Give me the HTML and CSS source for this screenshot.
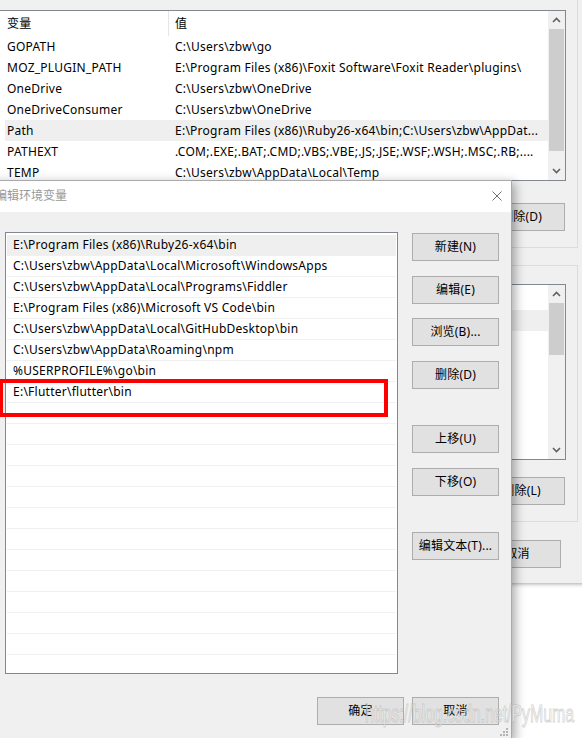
FILE: index.html
```html
<!DOCTYPE html>
<html lang="zh-CN">
<head>
<meta charset="utf-8">
<title>编辑环境变量</title>
<link rel="stylesheet" href="styles.css">
</head>
<body>
<div class="desk">

  <!-- background dialog: 环境变量 -->
  <div class="win-back">
    <div class="group g1">
      <div class="lv lv1">
        <div class="lv-body">
          <div class="lv-head"><div class="c1">变量</div><div class="c2">值</div></div>
          <div class="lv-row"><div class="c1">GOPATH</div><div class="c2">C:\Users\zbw\go</div></div>
          <div class="lv-row"><div class="c1">MOZ_PLUGIN_PATH</div><div class="c2">E:\Program Files (x86)\Foxit Software\Foxit Reader\plugins\</div></div>
          <div class="lv-row"><div class="c1">OneDrive</div><div class="c2">C:\Users\zbw\OneDrive</div></div>
          <div class="lv-row"><div class="c1">OneDriveConsumer</div><div class="c2">C:\Users\zbw\OneDrive</div></div>
          <div class="lv-row sel"><div class="c1">Path</div><div class="c2">E:\Program Files (x86)\Ruby26-x64\bin;C:\Users\zbw\AppDat...</div></div>
          <div class="lv-row"><div class="c1">PATHEXT</div><div class="c2">.COM;.EXE;.BAT;.CMD;.VBS;.VBE;.JS;.JSE;.WSF;.WSH;.MSC;.RB;....</div></div>
          <div class="lv-row"><div class="c1">TEMP</div><div class="c2">C:\Users\zbw\AppData\Local\Temp</div></div>
        </div>
        <div class="vs">
          <div class="vs-arrow"><svg width="9" height="6" viewBox="0 0 9 6"><polyline points="1,5 4.5,1.5 8,5" fill="none" stroke="#606060" stroke-width="1.6"/></svg></div>
          <div class="vs-thumb" style="height:122px"></div>
          <div class="vs-fill"></div>
          <div class="vs-arrow dn"><svg width="9" height="6" viewBox="0 0 9 6"><polyline points="1,1 4.5,4.5 8,1" fill="none" stroke="#606060" stroke-width="1.6"/></svg></div>
        </div>
      </div>
      <div class="grp-btns">
        <button class="btn">新建(N)...</button>
        <button class="btn">编辑(E)...</button>
        <button class="btn">删除(D)</button>
      </div>
    </div>

    <div class="group g2">
      <div class="lv lv2">
        <div class="lv-body">
          <div class="lv-head"><div class="c1">变量</div><div class="c2">值</div></div>
          <div class="lv-row sel"><div class="c1">ComSpec</div><div class="c2">C:\WINDOWS\system32\cmd.exe</div></div>
          <div class="lv-row"><div class="c1">DriverData</div><div class="c2">C:\Windows\System32\Drivers\DriverData</div></div>
          <div class="lv-row"><div class="c1">NUMBER_OF_PROCESSORS</div><div class="c2">4</div></div>
          <div class="lv-row"><div class="c1">OS</div><div class="c2">Windows_NT</div></div>
          <div class="lv-row"><div class="c1">Path</div><div class="c2">C:\WINDOWS\system32;C:\WINDOWS</div></div>
          <div class="lv-row"><div class="c1">PATHEXT</div><div class="c2">.COM;.EXE;.BAT;.CMD;.VBS;.VBE</div></div>
          <div class="lv-row"><div class="c1">PROCESSOR_ARCHITECTURE</div><div class="c2">AMD64</div></div>
        </div>
        <div class="vs">
          <div class="vs-arrow"><svg width="9" height="6" viewBox="0 0 9 6"><polyline points="1,5 4.5,1.5 8,5" fill="none" stroke="#606060" stroke-width="1.6"/></svg></div>
          <div class="vs-thumb" style="height:52px"></div>
          <div class="vs-fill"></div>
          <div class="vs-arrow dn"><svg width="9" height="6" viewBox="0 0 9 6"><polyline points="1,1 4.5,4.5 8,1" fill="none" stroke="#606060" stroke-width="1.6"/></svg></div>
        </div>
      </div>
      <div class="grp-btns">
        <button class="btn">新建(W)...</button>
        <button class="btn">编辑(I)...</button>
        <button class="btn">删除(L)</button>
      </div>
    </div>

    <div class="back-foot">
      <button class="btn">确定</button>
      <button class="btn">取消</button>
    </div>
    <svg class="grip" width="8" height="8" viewBox="0 0 8 8"><rect x="6" y="0" width="2" height="2"/><rect x="3" y="3" width="2" height="2"/><rect x="6" y="3" width="2" height="2"/><rect x="0" y="6" width="2" height="2"/><rect x="3" y="6" width="2" height="2"/><rect x="6" y="6" width="2" height="2"/></svg>
  </div>

  <!-- foreground dialog: 编辑环境变量 -->
  <div class="win-front">
    <div class="titlebar">
      <span class="title">编辑环境变量</span>
      <svg class="close" width="10" height="10" viewBox="0 0 10 10"><path d="M0.5 0.5 L9.5 9.5 M9.5 0.5 L0.5 9.5" stroke="#6f6f6f" stroke-width="1" fill="none"/></svg>
    </div>
    <div class="fg-main">
      <div class="pathlist">
        <div class="p-row sel">E:\Program Files (x86)\Ruby26-x64\bin</div>
        <div class="p-row">C:\Users\zbw\AppData\Local\Microsoft\WindowsApps</div>
        <div class="p-row">C:\Users\zbw\AppData\Local\Programs\Fiddler</div>
        <div class="p-row">E:\Program Files (x86)\Microsoft VS Code\bin</div>
        <div class="p-row">C:\Users\zbw\AppData\Local\GitHubDesktop\bin</div>
        <div class="p-row">C:\Users\zbw\AppData\Roaming\npm</div>
        <div class="p-row">%USERPROFILE%\go\bin</div>
        <div class="p-row">E:\Flutter\flutter\bin</div>
        <div class="p-row"></div>
        <div class="p-row"></div>
        <div class="p-row"></div>
        <div class="p-row"></div>
        <div class="p-row"></div>
        <div class="p-row"></div>
        <div class="p-row"></div>
        <div class="p-row"></div>
        <div class="p-row"></div>
        <div class="p-row"></div>
        <div class="p-row"></div>
        <div class="p-row"></div>
        <div class="p-row"></div>
      </div>
      <div class="side">
        <button class="btn">新建(N)</button>
        <button class="btn">编辑(E)</button>
        <button class="btn">浏览(B)...</button>
        <button class="btn">删除(D)</button>
        <button class="btn gap-lg">上移(U)</button>
        <button class="btn">下移(O)</button>
        <button class="btn gap-lg">编辑文本(T)...</button>
      </div>
    </div>
    <div class="fg-foot">
      <button class="btn">确定</button>
      <button class="btn">取消</button>
    </div>
    <svg class="grip" width="8" height="8" viewBox="0 0 8 8"><rect x="6" y="0" width="2" height="2"/><rect x="3" y="3" width="2" height="2"/><rect x="6" y="3" width="2" height="2"/><rect x="0" y="6" width="2" height="2"/><rect x="3" y="6" width="2" height="2"/><rect x="6" y="6" width="2" height="2"/></svg>
  </div>

  <div class="redbox"></div>
  <div class="watermark">https://blog.csdn.net/PyMuma</div>
</div>
</body>
</html>
```

FILE: styles.css
```css
* { box-sizing: border-box; }
html, body { margin: 0; padding: 0; }
body {
  width: 582px;
  height: 738px;
  overflow: hidden;
  background: #fff;
  font-family: "Noto Sans", "Noto Sans CJK SC", sans-serif;
  font-size: 12px;
  line-height: 16px;
  letter-spacing: 0.25px;
  color: #000;
}
.desk {
  position: relative;
  width: 582px;
  height: 738px;
  overflow: hidden;
  background: #fff;
}

/* ---------- buttons ---------- */
.btn {
  -webkit-appearance: none;
  appearance: none;
  width: 87px;
  height: 28px;
  flex: none;
  margin: 0;
  padding: 0;
  background: #e1e1e1;
  border: 1px solid #adadad;
  border-radius: 0;
  font-family: inherit;
  font-size: 12px;
  line-height: 16px;
  letter-spacing: 0.2px;
  color: #000;
  display: flex;
  align-items: center;
  justify-content: center;
  white-space: nowrap;
}

/* ---------- background window ---------- */
.win-back {
  position: absolute;
  left: -20px;
  top: -20px;
  width: 612px;
  background: #f0f0f0;
  padding: 15px 14px 15px 5px;
  box-shadow: 0 1px 4px rgba(0, 0, 0, 0.35);
  display: flex;
  flex-direction: column;
}
.group {
  border: 1px solid #dcdcdc;
  padding: 14px 11px 16px 12px;
  display: flex;
  flex-direction: column;
}
.group.g2 {
  margin-top: 17px;
  padding-top: 18px;
}
.grp-btns {
  display: flex;
  justify-content: flex-end;
  gap: 9px;
  margin-top: 22px;
  padding-right: 1px;
}
.g2 .grp-btns { margin-top: 17px; }
.back-foot {
  display: flex;
  justify-content: flex-end;
  gap: 8px;
  margin-top: 18px;
  margin-right: 17px;
}

.lv {
  border: 1px solid #828790;
  background: #fff;
  display: flex;
}
.lv1 { height: 171px; }
.lv2 { height: 176px; }
.lv-body {
  flex: 1;
  min-width: 0;
  overflow: hidden;
  padding-left: 6px;
}
.lv-head {
  height: 25px;
  display: flex;
  align-items: stretch;
}
.lv-head .c1 { border-right: 1px solid #e5e5e5; }
.lv-head > div { display: flex; align-items: center; }
.lv-row {
  height: 21px;
  display: flex;
  align-items: center;
}
.lv-row.sel { background: #efefef; }
.c1 {
  width: 164px;
  flex: none;
  padding-left: 2px;
  white-space: nowrap;
  overflow: hidden;
}
.c2 {
  flex: 1;
  min-width: 0;
  padding-left: 6px;
  white-space: nowrap;
  overflow: hidden;
}

/* scrollbar */
.vs {
  width: 17px;
  flex: none;
  background: #f0f0f0;
  display: flex;
  flex-direction: column;
  align-items: center;
}
.vs-arrow {
  width: 17px;
  height: 18px;
  flex: none;
  display: flex;
  align-items: center;
  justify-content: center;
}
.vs-arrow svg { display: block; }
.vs-thumb {
  width: 15px;
  flex: none;
  background: #cdcdcd;
}
.vs-fill { flex: 1; }

.grip {
  position: absolute;
  right: 2px;
  bottom: 2px;
  fill: #b4b4b4;
}

/* ---------- foreground window ---------- */
.win-front {
  position: absolute;
  left: -13px;
  top: 180px;
  width: 525px;
  height: 560px;
  background: #f0f0f0;
  border: 1px solid #aaaaaa;
  box-shadow: 3px 3px 10px rgba(0, 0, 0, 0.35);
  display: flex;
  flex-direction: column;
}
.win-front .grip { right: 3px; bottom: 3px; }
.titlebar {
  height: 31px;
  flex: none;
  background: #fff;
  display: flex;
  align-items: center;
  justify-content: space-between;
  padding: 0 9px 0 7px;
}
.title {
  color: #999;
  font-size: 12px;
  letter-spacing: 0;
  white-space: nowrap;
  margin-top: -2px;
}
.close { display: block; margin-top: -1px; }

.fg-main {
  display: flex;
  gap: 14px;
  padding: 20px 12px 0 17px;
}
.pathlist {
  width: 393px;
  height: 442px;
  flex: none;
  border: 1px solid #828790;
  background: #fff;
  overflow: hidden;
  padding: 2px 1px 0 1px;
}
.p-row {
  height: 21px;
  border-bottom: 1px solid #f0f0f0;
  padding-left: 6px;
  display: flex;
  align-items: center;
  white-space: nowrap;
  overflow: hidden;
}
.p-row.sel { background: #efefef; }

.side {
  display: flex;
  flex-direction: column;
  gap: 14.5px;
  padding-top: 1px;
}
.side .gap-lg { margin-top: 22px; }

.fg-foot {
  display: flex;
  justify-content: flex-end;
  gap: 8px;
  padding: 23px 12px 0;
}

/* ---------- annotations ---------- */
.redbox {
  position: absolute;
  left: -1px;
  top: 379px;
  width: 389px;
  height: 38px;
  border: 4px solid #ff0000;
}
.watermark {
  position: absolute;
  left: 365px;
  top: 700px;
  font-family: "Liberation Sans", sans-serif;
  font-size: 23px;
  line-height: 28px;
  letter-spacing: 0;
  white-space: nowrap;
  color: rgba(255, 255, 255, 0.6);
  -webkit-text-stroke: 1px rgba(170, 170, 170, 0.5);
  transform: scaleX(0.69);
  transform-origin: 0 0;
}
```
